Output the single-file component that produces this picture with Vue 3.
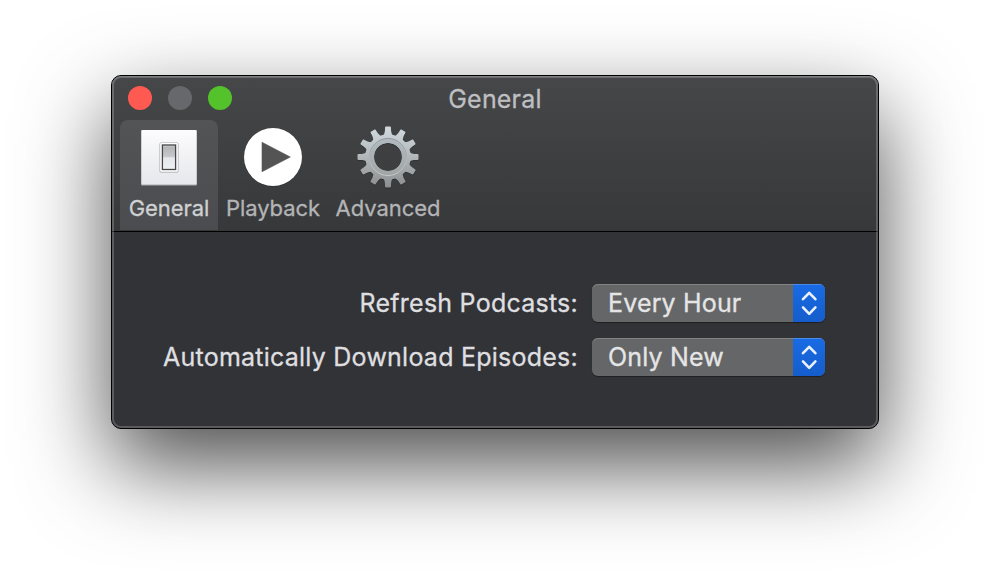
<script setup>
import { ref } from 'vue'

const tabs = [
  { id: 'general', label: 'General' },
  { id: 'playback', label: 'Playback' },
  { id: 'advanced', label: 'Advanced' },
]
const active = ref('general')

const settings = [
  { id: 'refresh', label: 'Refresh Podcasts:', value: 'Every Hour' },
  { id: 'download', label: 'Automatically Download Episodes:', value: 'Only New' },
]

const teeth = Array.from({ length: 12 }, (_, i) => `rotate(${i * 30} 32 32)`)
</script>

<template>
  <main class="desktop">
    <section class="window">
      <header class="toolbar">
        <div class="titlebar">
          <div class="lights">
            <span class="light close"></span>
            <span class="light minimize"></span>
            <span class="light zoom"></span>
          </div>
          <h1 class="title">General</h1>
        </div>
        <nav class="tabs">
          <button
            v-for="tab in tabs"
            :key="tab.id"
            class="tab"
            :class="[tab.id, { active: active === tab.id }]"
            @click="active = tab.id"
          >
            <svg v-if="tab.id === 'general'" class="icon" viewBox="0 0 64 64">
              <defs>
                <linearGradient id="plate" x1="0" y1="0" x2="0" y2="1">
                  <stop offset="0" stop-color="#fcfcfd" />
                  <stop offset="1" stop-color="#e6e7ec" />
                </linearGradient>
                <linearGradient id="rocker" x1="0" y1="0" x2="0" y2="1">
                  <stop offset="0" stop-color="#d4d5d6" />
                  <stop offset=".1" stop-color="#b4b6b9" />
                  <stop offset=".48" stop-color="#c6c8cb" />
                  <stop offset=".52" stop-color="#e4e8ec" />
                  <stop offset="1" stop-color="#eef1f4" />
                </linearGradient>
              </defs>
              <rect x="4" y="5" width="56" height="55.500" rx="1" fill="#a9abae" />
              <rect x="4.500" y="5" width="55" height="54.500" rx="1" fill="url(#plate)" />
              <rect x="22.200" y="17.500" width="19.600" height="30.300" rx="2" fill="#babbbf" opacity=".6" />
              <rect x="22.700" y="17.600" width="18.600" height="29.800" rx="1.500" fill="#b4b5b8" />
              <rect x="23.200" y="18" width="17.600" height="28.700" rx="1" fill="#fff" />
              <rect x="25.400" y="20" width="13.200" height="24.500" fill="url(#rocker)" stroke="#454649" stroke-width="1.300" />
            </svg>
            <svg v-else-if="tab.id === 'playback'" class="icon" viewBox="0 0 64 64">
              <circle cx="32" cy="32.700" r="29" fill="#252628" opacity=".5" />
              <circle cx="32" cy="32" r="29" fill="#fff" />
              <path d="M21 17.300v29.400L49.300 32z" fill="#545455" stroke="#545455" stroke-width=".6" stroke-linejoin="round" />
            </svg>
            <svg v-else class="icon" viewBox="0 0 64 64">
              <defs>
                <linearGradient id="metal" gradientUnits="userSpaceOnUse" x1="0" y1="1" x2="0" y2="63">
                  <stop offset="0" stop-color="#d0dadf" />
                  <stop offset=".5" stop-color="#b2b8ba" />
                  <stop offset="1" stop-color="#8b8d8f" />
                </linearGradient>
                <linearGradient id="rim" x1="0" y1="0" x2="0" y2="1">
                  <stop offset="0" stop-color="#8b959a" />
                  <stop offset="1" stop-color="#c9cccd" />
                </linearGradient>
                <linearGradient id="collar" x1="0" y1="0" x2="0" y2="1">
                  <stop offset="0" stop-color="#b0babe" />
                  <stop offset="1" stop-color="#a3a6a7" />
                </linearGradient>
                <mask id="cog">
                  <circle cx="32" cy="32" r="22.800" fill="#fff" />
                  <path
                    v-for="turn in teeth"
                    :key="turn"
                    :transform="turn"
                    d="M26.300 12 Q28.500 9.800 28.900 6 L29.100 2.200 Q29.200 1.500 29.900 1.500 H34.100 Q34.800 1.500 34.900 2.200 L35.100 6 Q35.500 9.800 37.700 12z"
                    fill="#fff"
                  />
                  <circle cx="32" cy="32" r="14" fill="#000" />
                </mask>
              </defs>
              <g transform="translate(0 .9)" opacity=".4">
                <rect width="64" height="64" fill="#17181a" mask="url(#cog)" />
              </g>
              <rect width="64" height="64" fill="url(#metal)" mask="url(#cog)" />
              <circle cx="32" cy="32" r="16.200" fill="none" stroke="url(#collar)" stroke-width="4.400" />
              <circle cx="32" cy="32" r="18.600" fill="none" stroke="url(#rim)" stroke-width=".9" />
            </svg>
            <span class="tab-label">{{ tab.label }}</span>
          </button>
        </nav>
      </header>

      <div class="settings">
        <template v-for="item in settings" :key="item.id">
          <span class="label">{{ item.label }}</span>
          <button class="popup">
            <span class="value">{{ item.value }}</span>
            <span class="stepper">
              <svg viewBox="0 0 32 38">
                <path d="M10 15.200 16.200 8.800l6.200 6.400M10 23.400l6.200 6.400 6.200-6.400" />
              </svg>
            </span>
          </button>
        </template>
      </div>
    </section>
  </main>
</template>

<style>
body {
  background: #fff;
  overflow: hidden;
}
</style>

<style scoped>
.desktop {
  box-sizing: border-box;
  width: 990px;
  height: 576px;
  padding: 75px 111px 147px;
  overflow: hidden;
  font-family: Inter, "Liberation Sans", sans-serif;
  -webkit-text-stroke: 0.3px currentColor;
}

.window {
  position: relative;
  box-sizing: border-box;
  width: 768px;
  height: 354px;
  border: 1px solid #000;
  border-radius: 10px;
  background: #323336;
  box-shadow: 0 36px 88px rgba(0, 0, 0, 0.7);
}

/* Light bevel just inside the window edge */
.window::after {
  content: "";
  position: absolute;
  inset: 0;
  border-radius: 9px;
  box-shadow: inset 0 0 0 2px rgba(255, 255, 255, 0.2), inset 0 1px 0 rgba(255, 255, 255, 0.15);
  pointer-events: none;
}

.toolbar {
  box-sizing: border-box;
  height: 156px;
  border-bottom: 1px solid #000;
  border-radius: 9px 9px 0 0;
  background: linear-gradient(#464749, #37383a);
}

.titlebar {
  display: grid;
  grid-template-columns: 1fr auto 1fr;
  align-items: center;
  height: 44px;
  padding: 0 16px;
}

.lights {
  display: flex;
  gap: 16px;
}

.light {
  width: 24px;
  height: 24px;
  border-radius: 50%;
}

.close { background: #ff5a52; }
.minimize { background: #67686b; }
.zoom { background: #54c22b; }

.title {
  margin: 2px 0 0;
  font-size: 25px;
  font-weight: 400;
  line-height: 30px;
  letter-spacing: 0.2px;
  color: #bebfc1;
}

.tabs {
  display: flex;
  padding-left: 8px;
}

.tab {
  display: flex;
  flex-direction: column;
  align-items: center;
  height: 110px;
  padding: 5px 0 0;
  border: 0;
  border-radius: 8px 8px 0 0;
  background: none;
  color: #b3b4b6;
  font: inherit;
}

.tab.general { width: 98px; }
.tab.playback { width: 110px; }
.tab.advanced { width: 120px; }

.tab.active {
  background: linear-gradient(#535456, #4b4c4f);
  color: #d0d1d2;
}

.icon {
  display: block;
  width: 64px;
  height: 64px;
}

.tab-label {
  margin-top: 5px;
  font-size: 22px;
  line-height: 28px;
  letter-spacing: -0.05px;
  white-space: nowrap;
}

.settings {
  display: grid;
  grid-template-columns: auto 233px;
  gap: 16px 14px;
  justify-content: end;
  align-items: center;
  padding: 52px 53px 0 0;
}

.label {
  text-align: right;
  font-size: 25px;
  line-height: 38px;
  letter-spacing: 0.24px;
  color: #dfdfe0;
  white-space: nowrap;
}

.popup {
  display: flex;
  width: 233px;
  height: 38px;
  padding: 0;
  overflow: hidden;
  border: 0;
  border-radius: 6px;
  background: #656668;
  box-shadow: inset 0 1px 0 #818284, 0 1px 1px rgba(0, 0, 0, 0.4);
  color: #e5e5e6;
  font: inherit;
}

.value {
  flex: 1;
  padding-left: 16px;
  text-align: left;
  font-size: 25px;
  line-height: 38px;
  letter-spacing: 0.16px;
}

.stepper {
  width: 32px;
  height: 38px;
  background: linear-gradient(#196be5, #155dcb);
  box-shadow: inset 0 1px 0 #4a8bea;
}

.stepper svg {
  display: block;
  width: 32px;
  height: 38px;
  fill: none;
  stroke: #e9f0fb;
  stroke-width: 2.6;
  stroke-linecap: round;
  stroke-linejoin: round;
}
</style>
